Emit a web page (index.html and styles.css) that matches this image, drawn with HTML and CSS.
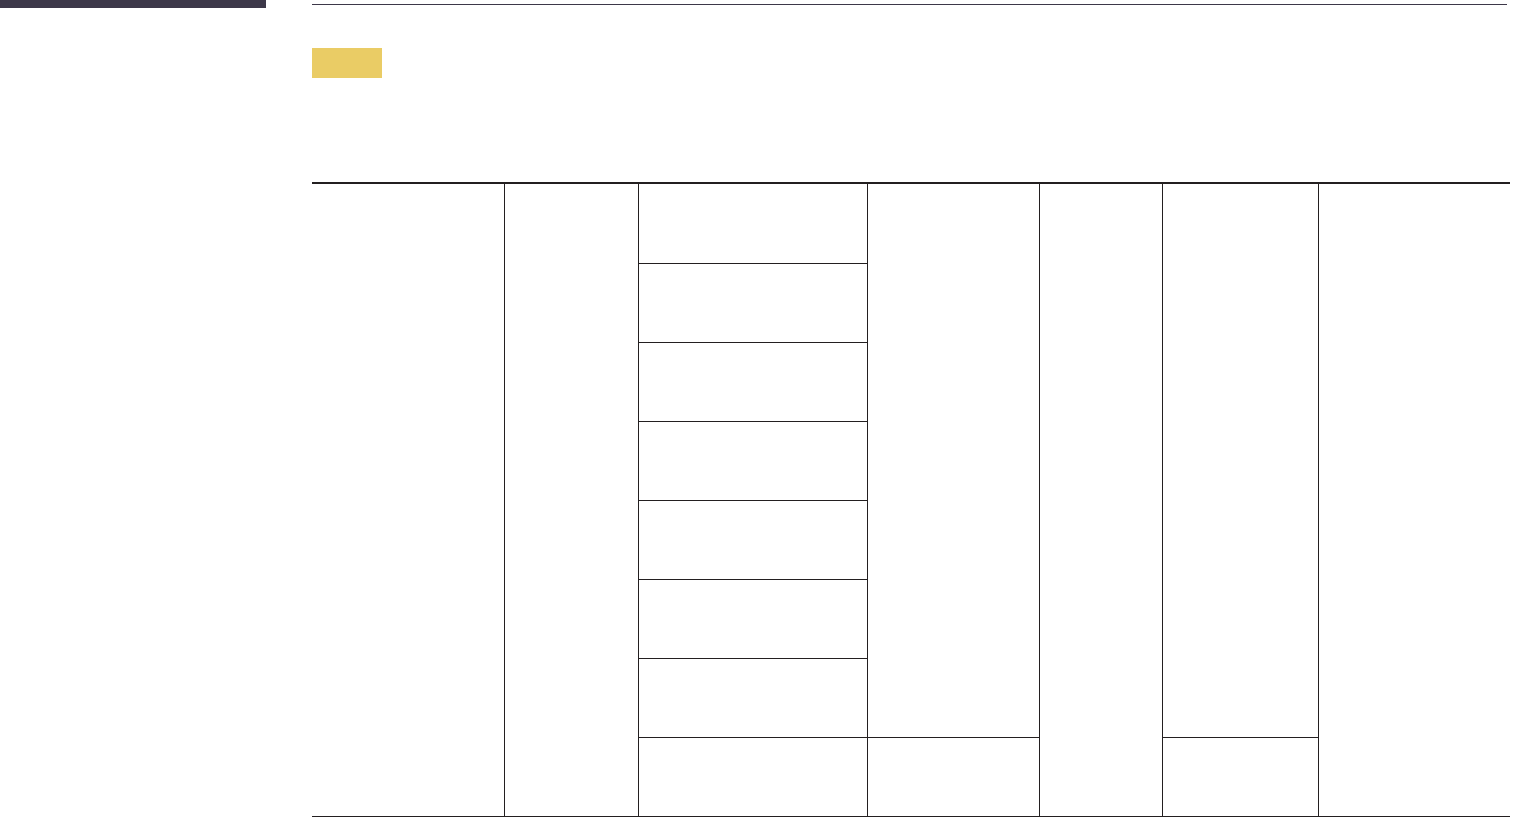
FILE: index.html
```html
<!DOCTYPE html>
<html>
<head>
<meta charset="utf-8">
<link rel="stylesheet" href="styles.css">
</head>
<body>
<div class="page">
  <aside class="side"><div class="side-bar"></div></aside>
  <main class="main">
    <div class="rule"></div>
    <div class="note-tag"></div>
    <div class="spec">
      <div class="c c1"></div>
      <div class="c c2"></div>
      <div class="c c3 r1"></div>
      <div class="c c3 r2 t"></div>
      <div class="c c3 r3 t"></div>
      <div class="c c3 r4 t"></div>
      <div class="c c3 r5 t"></div>
      <div class="c c3 r6 t"></div>
      <div class="c c3 r7 t"></div>
      <div class="c c3 r8 t"></div>
      <div class="c c4 top7"></div>
      <div class="c c4 r8 t"></div>
      <div class="c c5"></div>
      <div class="c c6 top7"></div>
      <div class="c c6 r8 t"></div>
      <div class="c c7"></div>
    </div>
  </main>
</div>
</body>
</html>
```
FILE: styles.css
```css
html, body {
  margin: 0;
  padding: 0;
  background: #ffffff;
  font-family: "Liberation Sans", Arial, sans-serif;
}
.page {
  display: flex;
  width: 1514px;
  height: 817px;
}
.side {
  width: 266px;
  flex: none;
}
.side-bar {
  height: 8px;
  background: #3d3849;
}
.main {
  margin-left: 46px;
  width: 1198px;
  display: flex;
  flex-direction: column;
}
.rule {
  margin-top: 4px;
  height: 1px;
  background: #3d3849;
  width: 1195px;
}
.note-tag {
  margin-top: 43px;
  width: 70px;
  height: 30px;
  background: #eacc65;
}
.spec {
  margin-top: 104px;
  display: grid;
  grid-template-columns: 192px 134px 229px 172px 123px 156px 192px;
  grid-template-rows: repeat(8, 79px);
  border-top: 2px solid #231f20;
  border-bottom: 1px solid #231f20;
}
.c { box-sizing: border-box; }
.c2, .c3, .c4, .c5, .c6, .c7 { border-left: 1px solid #231f20; }
.t { border-top: 1px solid #231f20; }
.c1 { grid-column: 1; grid-row: 1 / 9; }
.c2 { grid-column: 2; grid-row: 1 / 9; }
.c3 { grid-column: 3; }
.c4 { grid-column: 4; }
.c5 { grid-column: 5; grid-row: 1 / 9; }
.c6 { grid-column: 6; }
.c7 { grid-column: 7; grid-row: 1 / 9; }
.r1 { grid-row: 1; }
.r2 { grid-row: 2; }
.r3 { grid-row: 3; }
.r4 { grid-row: 4; }
.r5 { grid-row: 5; }
.r6 { grid-row: 6; }
.r7 { grid-row: 7; }
.r8 { grid-row: 8; }
.top7 { grid-row: 1 / 8; }
```
